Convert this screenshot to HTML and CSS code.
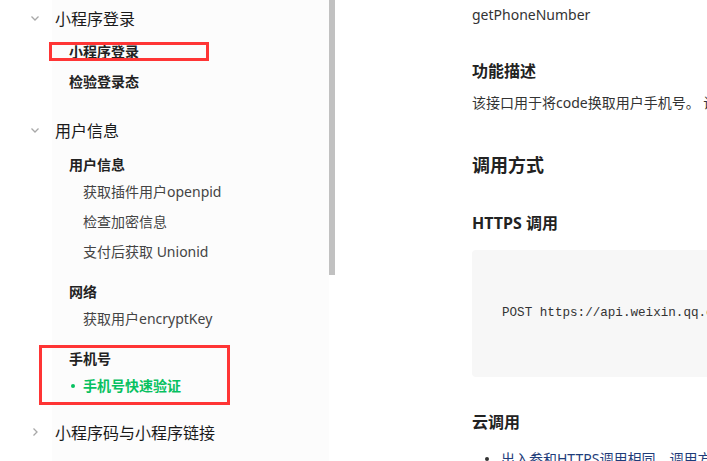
FILE: index.html
```html
<!DOCTYPE html>
<html lang="zh-CN">
<head>
<meta charset="utf-8">
<title>手机号快速验证</title>
<link rel="stylesheet" href="styles.css">
</head>
<body>
<div class="page">
  <aside class="sidebar">
    <section class="group">
      <div class="group-title"><svg class="chev" viewBox="0 0 10 10" width="10" height="10"><polyline points="1.5,3.5 5,7 8.5,3.5" /></svg><span>小程序登录</span></div>
      <ul class="items">
        <li class="item strong">小程序登录</li>
        <li class="item strong">检验登录态</li>
      </ul>
    </section>
    <section class="group g2">
      <div class="group-title"><svg class="chev" viewBox="0 0 10 10" width="10" height="10"><polyline points="1.5,3.5 5,7 8.5,3.5" /></svg><span>用户信息</span></div>
      <div class="sub first">用户信息</div>
      <ul class="leaves">
        <li class="leaf">获取插件用户openpid</li>
        <li class="leaf">检查加密信息</li>
        <li class="leaf">支付后获取 Unionid</li>
      </ul>
      <div class="sub">网络</div>
      <ul class="leaves">
        <li class="leaf">获取用户encryptKey</li>
      </ul>
      <div class="sub">手机号</div>
      <ul class="leaves">
        <li class="leaf active"><i class="dot"></i>手机号快速验证</li>
      </ul>
    </section>
    <section class="group g3">
      <div class="group-title"><svg class="chev" viewBox="0 0 10 10" width="10" height="10"><polyline points="3.5,1.5 7,5 3.5,8.5" /></svg><span>小程序码与小程序链接</span></div>
    </section>
    <div class="mark mark-1"></div>
    <div class="mark mark-2"></div>
  </aside>
  <div class="scroll"><div class="thumb"></div></div>
  <main class="content">
    <p class="api-name">getPhoneNumber</p>
    <h3 class="h3 first-h">功能描述</h3>
    <p class="desc">该接口用于将code换取用户手机号。 说明，每个code只能使用一次，code的有效期为5min</p>
    <h2 class="h2">调用方式</h2>
    <h3 class="h3 https">HTTPS 调用</h3>
    <pre class="code">POST https://api.weixin.qq.com/wxa/business/getuserphonenumber?access_token=ACCESS_TOKEN</pre>
    <h3 class="h3 cloud">云调用</h3>
    <ul class="bullets">
      <li class="bullet"><i class="bdot"></i>出入参和HTTPS调用相同，调用方式可查看云调用说明文档</li>
    </ul>
  </main>
</div>
</body>
</html>
```

FILE: styles.css
```css
html, body {
  margin: 0;
  padding: 0;
  background: #ffffff;
  overflow: hidden;
}
body {
  font-family: "Noto Sans", "Noto Sans CJK SC", sans-serif;
  color: #333;
  width: 707px;
  height: 461px;
}
.page {
  display: flex;
  align-items: flex-start;
  height: 461px;
}
.sidebar {
  position: relative;
  flex: 0 0 329px;
  height: 461px;
  background: linear-gradient(to right, #ffffff 52px, #fcfcfc 52px);
}
ul { list-style: none; margin: 0; padding: 0; }

.group-title {
  display: flex;
  align-items: center;
  height: 36px;
  font-size: 16px;
  color: #1a1a1a;
}
.chev {
  margin-left: 30px;
  margin-right: 15px;
  fill: none;
  stroke: #a8a8a8;
  stroke-width: 1.3;
}
.items { margin-top: 1px; }
.item {
  height: 30px;
  line-height: 30px;
  padding-left: 69px;
  font-size: 14px;
}
.strong { font-weight: 700; color: #222; }

.g2 { margin-top: 15px; }
.sub {
  height: 24px;
  line-height: 24px;
  padding-left: 69px;
  font-size: 14px;
  font-weight: 700;
  color: #222;
  margin-top: 13px;
}
.sub.first { margin-top: 5px; }
.leaf {
  height: 30px;
  line-height: 30px;
  padding-left: 83px;
  font-size: 14px;
  color: #444;
  position: relative;
}
.leaf.active {
  color: #07c160;
  font-weight: 700;
}
.dot {
  position: absolute;
  left: 71px;
  top: 13px;
  width: 4px;
  height: 4px;
  border-radius: 50%;
  background: #07c160;
}
.g3 { margin-top: 13px; }

.mark {
  position: absolute;
  box-sizing: border-box;
  border: 3px solid #ff3535;
}
.mark-1 { left: 49px; top: 42px; width: 160px; height: 19px; }
.mark-2 { left: 39px; top: 345px; width: 191px; height: 60px; }

.scroll {
  flex: 0 0 6px;
  height: 461px;
}
.thumb {
  height: 275px;
  background: #c1c1c1;
}

.content {
  flex: 0 0 auto;
  width: 600px;
  padding-left: 137px;
  font-size: 14px;
}
.api-name {
  margin: 0;
  line-height: 30px;
  color: #333;
}
.h3 {
  margin: 0;
  font-size: 16px;
  line-height: 24px;
  font-weight: 700;
  color: #222;
}
.first-h { margin-top: 29px; }
.desc {
  margin: 8px 0 0;
  line-height: 24px;
  white-space: nowrap;
  color: #333;
}
.h2 {
  margin: 36px 0 0;
  font-size: 18px;
  line-height: 28px;
  font-weight: 700;
  color: #222;
}
.https { margin-top: 32px; }
.code {
  margin: 15px 0 0;
  box-sizing: border-box;
  height: 127px;
  padding: 53px 30px 0;
  background: #f7f7f7;
  border-radius: 4px;
  font-family: "Liberation Mono", "DejaVu Sans Mono", monospace;
  font-size: 12.6px;
  line-height: 20px;
  color: #333;
  white-space: pre;
  overflow: hidden;
}
.cloud { margin-top: 33px; }
.bullets {
  margin-top: 13px;
}
.bullet {
  position: relative;
  padding-left: 29px;
  line-height: 24px;
  color: #1f3d7a;
  white-space: nowrap;
}
.bdot {
  position: absolute;
  left: 13px;
  top: 10px;
  width: 4px;
  height: 4px;
  border-radius: 50%;
  background: #333;
}
```
